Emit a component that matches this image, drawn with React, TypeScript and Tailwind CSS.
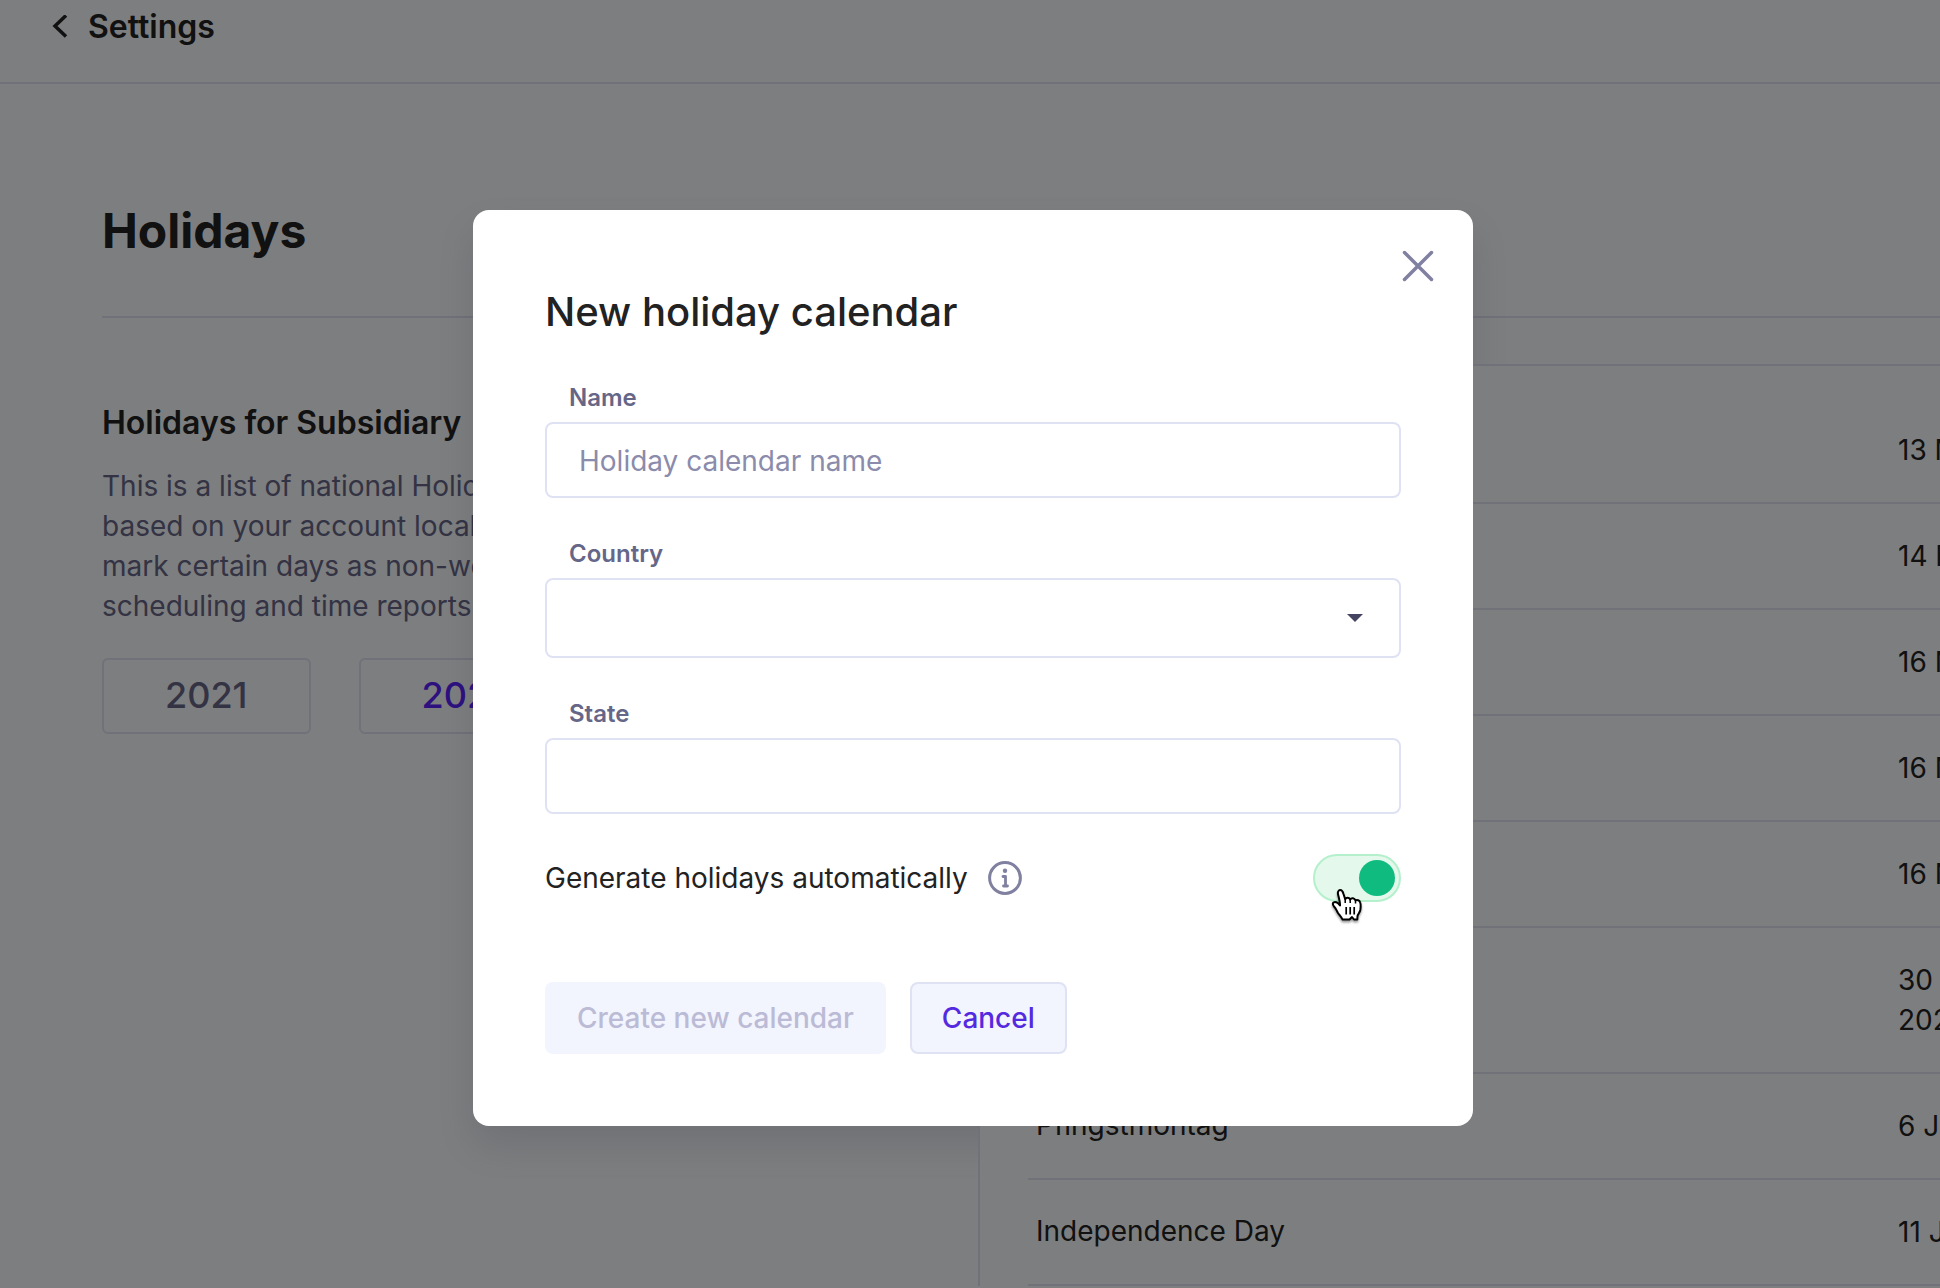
import { useState } from 'react';

type Holiday = { name: string; date: string[] };

const holidays: Holiday[] = [
  { name: '', date: ['13 May 2022'] },
  { name: '', date: ['14 May 2022'] },
  { name: '', date: ['16 May 2022'] },
  { name: '', date: ['16 May 2022'] },
  { name: '', date: ['16 May 2022'] },
  { name: '', date: ['30 May', '2022'] },
  { name: 'Pfingstmontag', date: ['6 Jun 2022'] },
  { name: 'Independence Day', date: ['11 Jul 2022'] },
];

const fieldClass =
  'w-full rounded-lg border-2 border-[#dfe2f3] bg-white px-8 pt-0.5 text-[28px] text-[#222222] outline-none placeholder:text-[#8b8bab] placeholder:opacity-100';
const labelClass = 'mb-2 block pl-6 text-2xl leading-8 font-semibold text-[#666688]';
const yearClass = 'h-[76px] rounded-md border-2 border-[#e0e2f2] px-[61px] pb-0.5 text-4xl font-medium';

function HandCursor() {
  return (
    <svg
      className="pointer-events-none absolute top-[34px] left-[18px] h-9 w-8 drop-shadow-[0_2px_1px_rgba(0,0,0,0.4)]"
      viewBox="0 0 32 36"
      fill="none"
      aria-hidden="true"
    >
      <path
        d="M11.500 31.500C10.500 29 8.500 27 7 25C5.500 22.500 5 20.500 3 18.500C1.400 16.500 1.400 14.600 3.200 14.200C5.300 13.800 7.500 15.300 9 17.500C9.200 14.500 8 10 7.200 7C6.500 4.500 7 2.300 9 2.100C11 1.900 11.800 3.500 12.500 6L14.200 11.300C15 9.300 18 9 19.200 11.500C20.500 9.600 23.500 10 24.500 12.500C26 11.500 28.500 12.300 29.200 14.500C30 16.800 29.700 19.500 29.300 22C28.800 24.500 27 26 26.500 28L26.300 31.500H23L21 29L18.500 31.500Z"
        fill="white"
        stroke="black"
        strokeWidth="2"
        strokeLinejoin="round"
      />
      <path d="M14.200 11.300V15M19.200 11.500V15M24.500 12.500V15.500" stroke="black" strokeWidth="1.500" />
      <path d="M15.200 19V26.500M19.200 19V26.500M23.200 19V26.500" stroke="black" strokeWidth="1.700" />
    </svg>
  );
}

function NewCalendarDialog() {
  const [name, setName] = useState('');
  const [country, setCountry] = useState('');
  const [state, setState] = useState('');
  const [generate, setGenerate] = useState(true);

  return (
    <form
      role="dialog"
      aria-labelledby="dialog-title"
      onSubmit={(e) => e.preventDefault()}
      className="relative w-full max-w-[1000px] rounded-2xl bg-white px-[72px] pt-[78px] pb-[72px]"
    >
      <button type="button" aria-label="Close" className="absolute top-10 right-[39px]">
        <svg className="h-8 w-8" viewBox="0 0 32 32" fill="none" stroke="#8080a0" strokeWidth="3.500" strokeLinecap="round">
          <path d="M2.500 2.500L29.500 29.500M29.500 2.500L2.500 29.500" />
        </svg>
      </button>

      <h2 id="dialog-title" className="mb-[46px] text-[40px] leading-[48px] font-medium text-[#222222]">
        New holiday calendar
      </h2>

      <div className="flex flex-col gap-10">
        <div>
          <label htmlFor="name" className={labelClass}>Name</label>
          <input
            id="name"
            type="text"
            value={name}
            onChange={(e) => setName(e.target.value)}
            placeholder="Holiday calendar name"
            className={`h-[76px] ${fieldClass}`}
          />
        </div>

        <div>
          <label htmlFor="country" className={labelClass}>Country</label>
          <div className="relative">
            <select
              id="country"
              value={country}
              onChange={(e) => setCountry(e.target.value)}
              className={`block h-20 appearance-none ${fieldClass}`}
            >
              <option value=""></option>
              <option value="de">Germany</option>
              <option value="us">United States</option>
            </select>
            <svg className="pointer-events-none absolute top-9 right-[38px] h-2 w-4" viewBox="0 0 16 8" fill="#444460" aria-hidden="true">
              <path d="M0 0H16L8 8Z" />
            </svg>
          </div>
        </div>

        <div>
          <label htmlFor="state" className={labelClass}>State</label>
          <input
            id="state"
            type="text"
            value={state}
            onChange={(e) => setState(e.target.value)}
            className={`h-[76px] ${fieldClass}`}
          />
        </div>

        <div className="flex items-center">
          <label htmlFor="generate" className="text-[28px] leading-10 text-[#222222]">
            Generate holidays automatically
          </label>
          <svg className="ml-5 h-[34px] w-[34px]" viewBox="0 0 34 34" fill="none" stroke="#8080a0" aria-hidden="true">
            <circle cx="17" cy="17" r="15.400" strokeWidth="3" />
            <circle cx="17" cy="9.800" r="2.200" fill="#8080a0" stroke="none" />
            <path d="M15 15.500H17.500V25M15.500 25H19.500" strokeWidth="2.800" strokeLinecap="round" strokeLinejoin="round" />
          </svg>
          <div className="relative ml-auto h-12 w-[88px]">
            <input
              id="generate"
              type="checkbox"
              role="switch"
              checked={generate}
              onChange={(e) => setGenerate(e.target.checked)}
              className="peer block h-12 w-[88px] cursor-pointer appearance-none rounded-full border-2 border-[#e0e2f2] bg-[#f2f4fe] checked:border-[#b4f0cc] checked:bg-[#e4f9ec]"
            />
            <span className="pointer-events-none absolute top-1.5 left-1.5 h-9 w-9 rounded-full bg-[#b8b8d4] peer-checked:left-[46px] peer-checked:bg-[#10bb80]" />
            <HandCursor />
          </div>
        </div>
      </div>

      <div className="mt-20 flex gap-6">
        <button type="submit" disabled className="h-[72px] rounded-lg bg-[#f2f4fe] px-8 text-[28px] font-medium text-[#bbbbd6]">
          Create new calendar
        </button>
        <button type="button" className="h-[72px] rounded-lg border-2 border-[#dfe2f3] bg-[#f2f4fe] px-[30px] text-[28px] font-medium text-[#5429e0]">
          Cancel
        </button>
      </div>
    </form>
  );
}

export default function App() {
  return (
    <div className="relative h-screen overflow-hidden bg-[#fafcfe] font-[Inter,sans-serif] text-[#222222]">
      <header className="flex h-[84px] items-center border-b-2 border-[#e0e2f2] pb-7 pl-[52px]">
        <a href="#settings" className="flex items-center gap-5 text-[32px] leading-10 font-semibold">
          <svg className="h-6 w-4" viewBox="0 0 16 24" fill="none" stroke="currentColor" strokeWidth="3.500" aria-hidden="true">
            <path d="M14 0.500L3 11L14 21.500" />
          </svg>
          Settings
        </a>
      </header>

      <main className="pl-[102px]">
        <h1 className="border-b-2 border-[#e0e2f2] pt-[119px] pb-[57px] text-5xl leading-14 font-bold">Holidays</h1>

        <div className="mt-[46px] flex">
          <section className="w-[876px] shrink-0 pt-[39px]">
            <h2 className="text-[32px] leading-10 font-semibold">Holidays for Subsidiary</h2>
            <p className="mt-[23px] text-[28px] leading-10 whitespace-nowrap text-[#666688]">
              This is a list of national Holidays
              <br />
              based on your account locale. You can
              <br />
              mark certain days as non-working for
              <br />
              scheduling and time reports.
            </p>
            <div className="mt-8 flex gap-12">
              <button type="button" className={`${yearClass} text-[#666688]`}>
                2021
              </button>
              <button type="button" className={`${yearClass} text-[#5a22ff]`}>
                2022
              </button>
            </div>
          </section>

          <section className="relative z-10 min-w-0 flex-1 border-t-2 border-l-2 border-[#e0e2f2] bg-[#fafcfe] pt-8 pl-12">
            <table className="min-w-full text-left text-[28px] leading-10">
              <tbody>
                {holidays.map((holiday, i) => (
                  <tr key={i} className="border-b-2 border-[#e0e2f2] align-top">
                    <td className="min-w-[862px] pt-[31px] pb-[33px] pl-2 whitespace-nowrap">{holiday.name}</td>
                    <td className="py-8 pl-2 whitespace-nowrap">
                      {holiday.date.map((line) => (
                        <div key={line}>{line}</div>
                      ))}
                    </td>
                  </tr>
                ))}
              </tbody>
            </table>
          </section>
        </div>
      </main>

      {/* the dialog's shadow falls on the page but stays under the table panel */}
      <div className="absolute inset-x-0 top-[210px] flex justify-center pl-1.5">
        <div className="h-[916px] w-full max-w-[1000px] rounded-2xl shadow-[0_20px_36px_rgba(80,80,130,0.14)]" />
      </div>

      <div className="absolute inset-0 z-20 flex items-start justify-center bg-black/50 pt-[210px] pl-1.5">
        <NewCalendarDialog />
      </div>
    </div>
  );
}
